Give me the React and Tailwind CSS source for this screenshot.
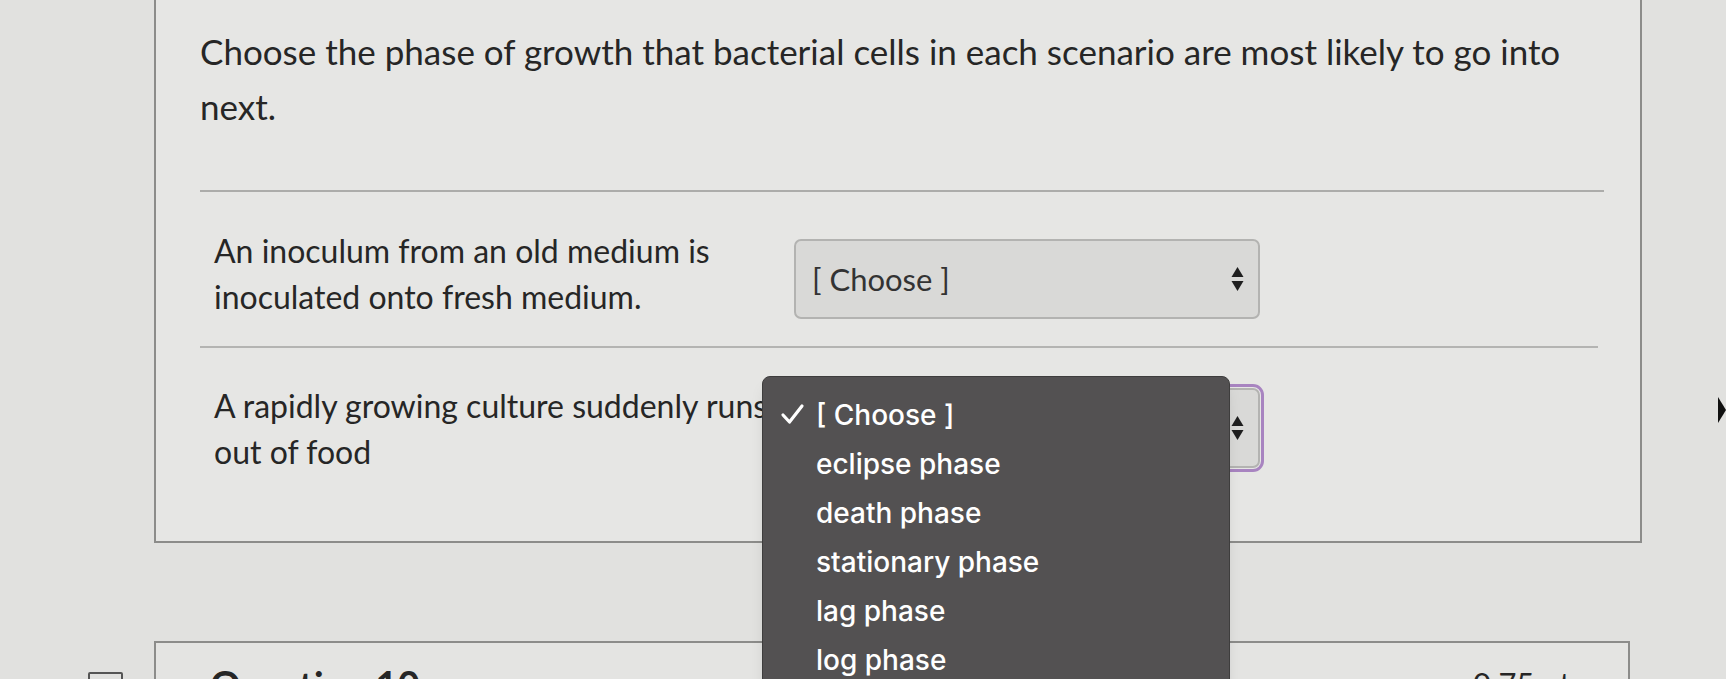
import { useState } from "react";

const options = ["[ Choose ]", "eclipse phase", "death phase", "stationary phase", "lag phase", "log phase"];

function SelectArrows() {
    return (
        <svg width="13" height="26" viewBox="0 0 13 26" className="shrink-0">
            <path d="M6.5 1 L12.5 11 L0.5 11 Z" fill="#1f1f1f" />
            <path d="M6.5 25 L12.5 15 L0.5 15 Z" fill="#1f1f1f" />
        </svg>
    );
}

function FakeSelect({ focused }) {
    const ring = focused ? "outline-[3px] outline outline-[#a884c0] outline-offset-[1px]" : "";
    return (
        <div className={`w-[466px] h-[80px] rounded-[7px] border-2 border-[#b3b3b1] bg-[#d9d9d7] flex items-center justify-between pl-[16px] pr-[14px] ${ring}`}>
            <span className="text-[31px] text-[#333] leading-none">[ Choose ]</span>
            <SelectArrows />
        </div>
    );
}

function Dropdown() {
    const [selected] = useState(0);
    return (
        <div className="absolute left-[-32px] top-[-12px] w-[468px] h-[330px] bg-[#535152] rounded-t-[8px] border border-[#3e3d3d] shadow-lg pt-[13px] font-['Inter',sans-serif]">
            {options.map((opt, i) => (
                <div key={opt} className="h-[49px] flex items-center text-white text-[28px] font-medium">
                    <span className="w-[53px] flex pl-[17px]">
                        {i === selected && (
                            <svg width="25" height="23" viewBox="0 0 25 23">
                                <path d="M3 12 L9.5 19 L22 3" fill="none" stroke="#fff" strokeWidth="3.2" strokeLinecap="round" strokeLinejoin="round" />
                            </svg>
                        )}
                    </span>
                    <span>{opt}</span>
                </div>
            ))}
        </div>
    );
}

export default function App() {
    return (
        <div className="relative w-full h-[679px] overflow-hidden bg-[#e1e1df] font-['Lato',sans-serif] text-[#262626]">
            {/* question card */}
            <div className="ml-[154px] w-[1488px] h-[543px] border-l-2 border-r-2 border-b-2 border-[#8c8c8a] bg-[#e6e6e4] pl-[44px] pr-[36px] pt-[24px]">
                <p className="text-[35px] leading-[55px] whitespace-nowrap">
                    Choose the phase of growth that bacterial cells in each scenario are most likely to go into<br />next.
                </p>

                <div className="mt-[56px] h-[2px] bg-[#acacaa]" />

                <div className="flex items-start pt-[36px] pl-[14px]">
                    <div className="w-[580px] text-[32px] leading-[46px] whitespace-nowrap">
                        An inoculum from an old medium is<br />inoculated onto fresh medium.
                    </div>
                    <div className="mt-[11px]">
                        <FakeSelect />
                    </div>
                </div>

                <div className="mt-[26px] h-[2px] bg-[#b4b4b2] mr-[6px]" />

                <div className="flex items-start pt-[35px] pl-[14px]">
                    <div className="w-[580px] text-[32px] leading-[46px] whitespace-nowrap">
                        A rapidly growing culture suddenly runs<br />out of food
                    </div>
                    <div className="relative mt-[5px]">
                        <FakeSelect focused />
                        <Dropdown />
                    </div>
                </div>
            </div>

            {/* next question card, cut off by the bottom edge */}
            <div className="flex items-start mt-[98px]">
                <div className="w-[154px] pl-[88px] pt-[31px]">
                    <div className="w-[35px] h-[30px] border-2 border-[#555] rounded-[2px]" />
                </div>
                <div className="w-[1476px] h-[60px] border-t-2 border-l-2 border-r-2 border-[#8c8c8a] bg-[#e4e4e2] flex justify-between items-start pl-[54px] pr-[44px] pt-[22px]">
                    <span className="text-[38px] font-bold leading-none">Question 10</span>
                    <span className="text-[31px] leading-none pt-[3px]">0.75 pts</span>
                </div>
            </div>

            <div className="absolute right-0 top-[397px] w-0 h-0 border-t-[13px] border-b-[13px] border-l-[8px] border-t-transparent border-b-transparent border-l-[#111]" />
        </div>
    );
}
